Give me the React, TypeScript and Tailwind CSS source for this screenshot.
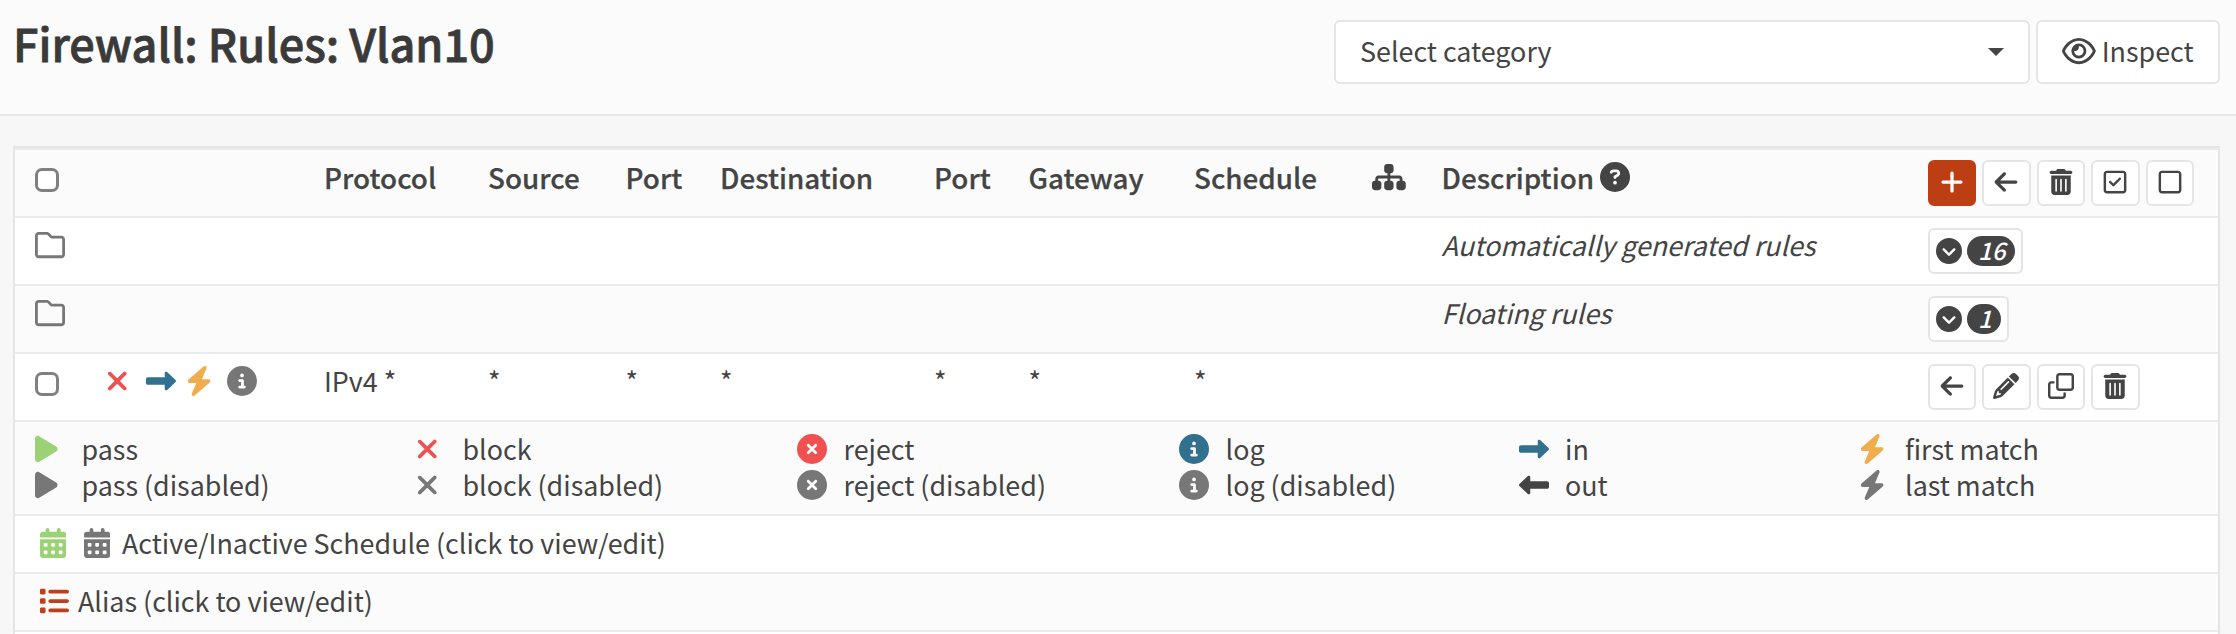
import React from "react";
import type { ReactNode } from "react";
import {
  FaArrowLeft,
  FaBolt,
  FaCalendarDays,
  FaCircleChevronDown,
  FaCircleInfo,
  FaCircleQuestion,
  FaCircleXmark,
  FaLeftLong,
  FaList,
  FaPencil,
  FaPlay,
  FaPlus,
  FaRegClone,
  FaRegEye,
  FaRegFolder,
  FaRegSquare,
  FaRegSquareCheck,
  FaRightLong,
  FaSitemap,
  FaTrashCan,
  FaXmark,
} from "react-icons/fa6";
import type { IconType } from "react-icons";

function Row({ striped, children }: { striped?: boolean; children: ReactNode }) {
  return (
    <div
      className={`grid h-[68px] grid-cols-[71px_218px_164px_137.5px_94.5px_214px_94.5px_165.5px_178px_69.5px_486px_1fr] items-start border-t-2 border-[#ebebeb] pt-[9px] pl-5 ${
        striped ? "bg-[#fbfbfb]" : "bg-white"
      }`}
    >
      {children}
    </div>
  );
}

function Checkbox() {
  return (
    <span
      role="checkbox"
      aria-checked={false}
      className="mt-[9px] block size-6 rounded-[7px] border-3 border-[#808080] bg-white"
    />
  );
}

function IconButton({ icon: Icon, primary }: { icon: IconType; primary?: boolean }) {
  return (
    <button
      className={`flex h-[46px] w-[48.5px] items-center justify-center rounded-md border-2 text-[26px] ${
        primary ? "border-[#be3e14] bg-[#be3e14] text-white" : "border-[#e5e5e5] bg-white"
      }`}
    >
      <Icon className="-translate-y-px" />
    </button>
  );
}

function Actions({ children }: { children: ReactNode }) {
  return <div className="flex gap-1.5 pt-px">{children}</div>;
}

function CountButton({ count }: { count: number }) {
  return (
    <button className="flex h-[46px] items-center gap-[5px] rounded-md border-2 border-[#e5e5e5] bg-white px-1.5">
      <FaCircleChevronDown className="-mt-px text-[26px]" />
      <span className="flex h-[30px] items-center rounded-full bg-[#444] pr-[9.5px] pl-[11.5px] text-[24px] leading-[30px] font-medium text-white italic">
        <span className="-translate-y-px">{count}</span>
      </span>
    </button>
  );
}

function FolderRow({ label, count, striped }: { label: string; count: number; striped?: boolean }) {
  return (
    <Row striped={striped}>
      <div className="col-span-10 flex h-9 items-center text-[30px] text-[#777]">
        <FaRegFolder />
      </div>
      <div className="italic">{label}</div>
      <Actions>
        <CountButton count={count} />
      </Actions>
    </Row>
  );
}

const columns = ["Protocol", "Source", "Port", "Destination", "Port", "Gateway", "Schedule"];

type LegendItem = { icon: IconType; style: string; label: string };
const legend: LegendItem[][] = [
  [
    { icon: FaPlay, style: "w-[22.5px] text-[#9bd275]", label: "pass" },
    { icon: FaXmark, style: "w-[22.5px] text-[#f05050]", label: "block" },
    { icon: FaCircleXmark, style: "w-[30px] text-[#f05050]", label: "reject" },
    { icon: FaCircleInfo, style: "w-[30px] text-[#31708f]", label: "log" },
    { icon: FaRightLong, style: "w-[30px] text-[#31708f]", label: "in" },
    { icon: FaBolt, style: "w-[26.25px] text-[#f0ad4e]", label: "first match" },
  ],
  [
    { icon: FaPlay, style: "w-[22.5px] text-[#777]", label: "pass (disabled)" },
    { icon: FaXmark, style: "w-[22.5px] text-[#777]", label: "block (disabled)" },
    { icon: FaCircleXmark, style: "w-[30px] text-[#777]", label: "reject (disabled)" },
    { icon: FaCircleInfo, style: "w-[30px] text-[#777]", label: "log (disabled)" },
    { icon: FaLeftLong, style: "w-[30px] text-[#444]", label: "out" },
    { icon: FaBolt, style: "w-[26.25px] text-[#777]", label: "last match" },
  ],
];

function Header() {
  return (
    <header className="flex h-[116px] items-start justify-between border-b-2 border-[#e7e7e7] bg-[#fbfbfb] pr-4 pl-[13px]">
      <h1 className="pt-[13px] text-[45px] leading-[60px] font-medium text-[#3a3a3a] [-webkit-text-stroke:0.8px_currentColor]">
        Firewall: Rules: Vlan10
      </h1>
      <div className="flex gap-1.5 pt-5">
        <button className="flex h-16 w-[696px] items-center justify-between rounded-md border-2 border-[#e5e5e5] bg-white pr-6 pb-[3px] pl-6">
          <span>Select category</span>
          <svg viewBox="0 0 16 8" className="mt-[3px] h-2 w-4" fill="currentColor">
            <path d="M0 0h16L8 8z" />
          </svg>
        </button>
        <button className="flex h-16 w-[184px] items-center gap-1.5 rounded-md border-2 border-[#e5e5e5] bg-white pb-[3px] pl-6">
          <FaRegEye className="h-[30px] w-[33.75px]" />
          <span>Inspect</span>
        </button>
      </div>
    </header>
  );
}

export default function App() {
  return (
    <div className="h-[634px] w-[2236px] overflow-hidden bg-[#f7f7f7] font-['Noto_Sans_CJK_SC','Noto_Sans',sans-serif] text-[26.86px] leading-9 whitespace-nowrap text-[#444]">
      <Header />
      <main className="mt-[30px] mr-4 ml-[13px] border-2 border-b-0 border-[#e5e5e5]">
        <Row striped>
          <div className="col-span-2">
            <Checkbox />
          </div>
          {columns.map((name, i) => (
            <div key={i} className="text-[27.8px] font-medium [-webkit-text-stroke:0.25px_currentColor]">
              {name}
            </div>
          ))}
          <div className="flex h-9 items-center text-[30px]">
            <FaSitemap className="h-[30px] w-[33.75px]" />
          </div>
          <div className="flex items-center gap-1.5 text-[27.8px] font-medium">
            <span className="[-webkit-text-stroke:0.25px_currentColor]">Description</span>
            <FaCircleQuestion className="text-[30px]" />
          </div>
          <Actions>
            <IconButton icon={FaPlus} primary />
            <IconButton icon={FaArrowLeft} />
            <IconButton icon={FaTrashCan} />
            <IconButton icon={FaRegSquareCheck} />
            <IconButton icon={FaRegSquare} />
          </Actions>
        </Row>
        <FolderRow label="Automatically generated rules" count={16} />
        <FolderRow label="Floating rules" count={1} striped />
        <Row>
          <Checkbox />
          <div className="flex h-9 items-center text-[30px]">
            <FaXmark className="w-[22.5px] text-[#f05050]" />
            <FaRightLong className="ml-[17.5px] text-[#31708f]" />
            <FaBolt className="ml-[9.5px] w-[26.25px] text-[#f0ad4e]" />
            <FaCircleInfo className="ml-[15.5px] text-[#777]" />
          </div>
          <div>IPv4 *</div>
          {columns.slice(1).map((_, i) => (
            <div key={i}>*</div>
          ))}
          <div className="col-span-2" />
          <Actions>
            <IconButton icon={FaArrowLeft} />
            <IconButton icon={FaPencil} />
            <IconButton icon={FaRegClone} />
            <IconButton icon={FaTrashCan} />
          </Actions>
        </Row>
        <div className="h-[94px] border-t-2 border-[#ebebeb] bg-[#fbfbfb] pt-[9px] pl-5">
          {legend.map((items, r) => (
            <div key={r} className="grid grid-cols-[381px_381px_382px_339.5px_340px_1fr]">
              {items.map(({ icon: Icon, style, label }) => (
                <div key={label} className="flex h-9 items-center">
                  <span className="flex w-[46.5px] items-center">
                    <Icon className={`h-[30px] ${style}`} />
                  </span>
                  {label}
                </div>
              ))}
            </div>
          ))}
        </div>
        <div className="flex h-[58px] items-start border-t-2 border-[#ebebeb] bg-white pt-[9px] pl-[25px]">
          <FaCalendarDays className="mt-[3px] h-[30px] w-[26.25px] text-[#9bd275]" />
          <FaCalendarDays className="mt-[3px] ml-[17.5px] h-[30px] w-[26.25px] text-[#777]" />
          <span className="ml-3">Active/Inactive Schedule (click to view/edit)</span>
        </div>
        <div className="flex h-[58px] items-start border-t-2 border-[#ebebeb] bg-[#fbfbfb] pt-[9px] pl-6">
          <FaList className="mt-[3px] text-[30px] text-[#b9411c]" />
          <span className="ml-[9px]">Alias (click to view/edit)</span>
        </div>
        <div className="h-2 border-t-2 border-[#ebebeb] bg-white" />
      </main>
    </div>
  );
}
